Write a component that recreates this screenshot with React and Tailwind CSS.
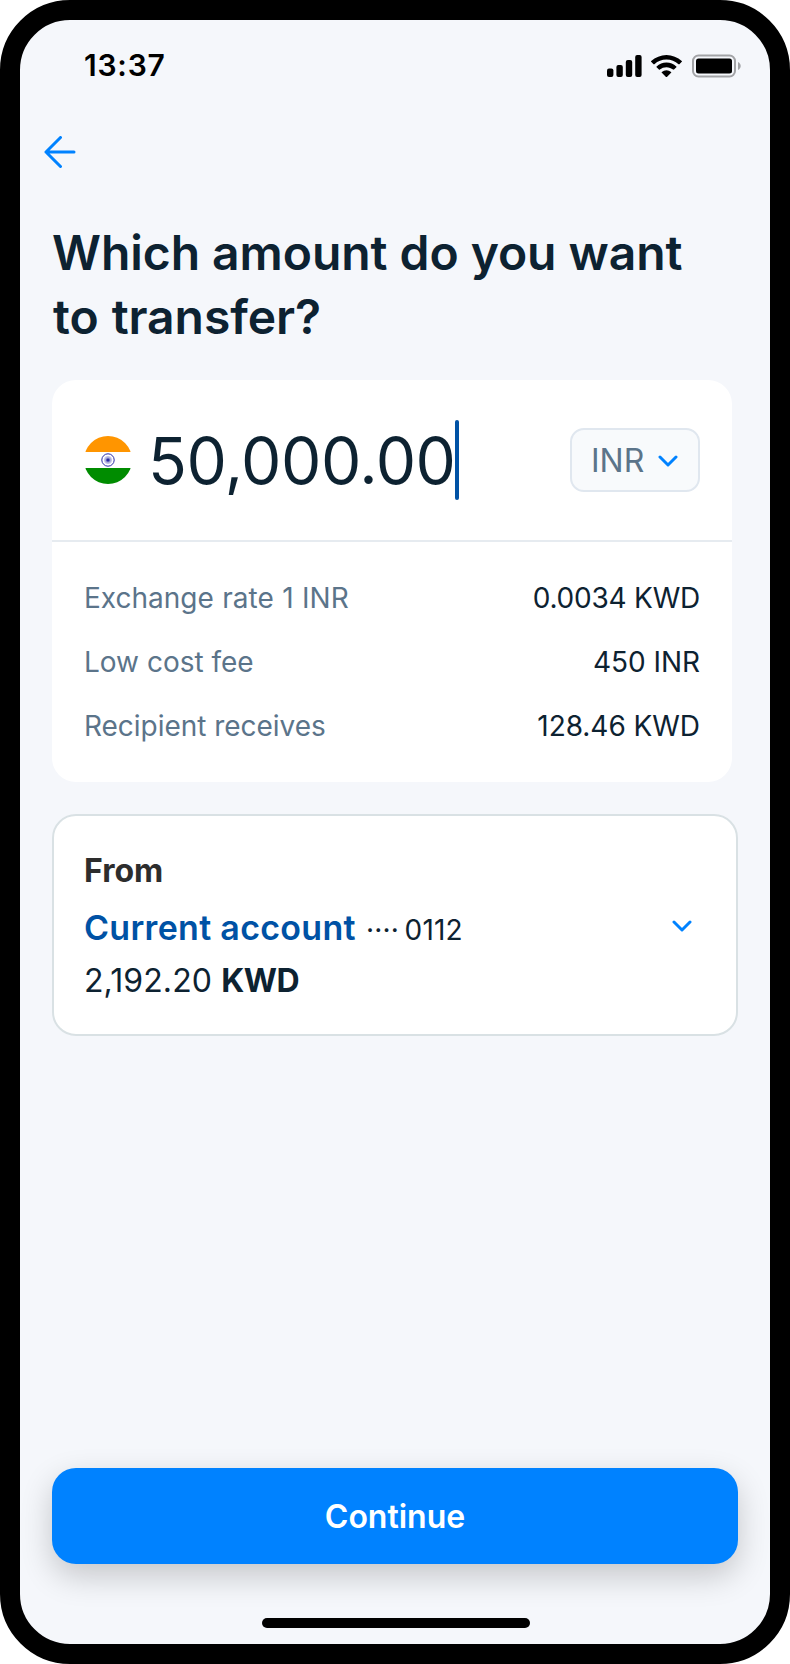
import React from 'react';

const rates = [
    { label: 'Exchange rate 1 INR', value: '0.0034 KWD', labelClass: '[word-spacing:0.6px]', valueClass: 'tracking-[-0.22px]' },
    { label: 'Low cost fee', value: '450 INR', valueClass: 'tracking-[-0.05px]' },
    { label: 'Recipient receives', value: '128.46 KWD', labelClass: 'tracking-[-0.03px]', valueClass: 'tracking-[-0.05px]' },
];

const App = () => (
    <div className="w-[790px] h-[1664px] bg-white">
        <div className="w-full h-full flex flex-col rounded-[70px] border-[20px] border-black bg-[#f5f7fb] font-['Inter',sans-serif] text-[#0d2231]">
            <StatusBar />

            <button className="ml-6 mt-8 w-8 h-8 shrink-0" aria-label="Back">
                <BackArrow />
            </button>

            <main className="flex-1 flex flex-col px-8 pt-8 pb-4">
                <h1 className="mt-[21px] text-[48px] leading-[64px] font-semibold">
                    <span className="tracking-[-0.05px]">Which amount do you want</span><br />
                    <span className="ml-px tracking-[-0.05px] [word-spacing:1px]">to transfer?</span>
                </h1>

                <AmountCard />
                <AccountCard />

                <button className="mt-auto mb-[54px] h-24 shrink-0 rounded-3xl bg-[#0082ff] pt-0.5 text-white text-[32px] leading-10 font-semibold shadow-[0_12px_32px_rgba(0,0,0,0.2)]">
                    Continue
                </button>
                <div className="ml-0.5 w-[268px] h-2.5 shrink-0 rounded-full bg-black self-center" />
            </main>
        </div>
    </div>
);

const StatusBar = () => (
    <header className="h-[84px] shrink-0 flex items-start justify-between pl-16 pr-[29px] text-black">
        <span className="mt-[27px] text-[30px] leading-9 font-semibold tracking-[0.8px]">13:37</span>
        <div className="mt-[34px] flex items-center">
            <SignalIcon />
            <WifiIcon />
            <BatteryIcon />
        </div>
    </header>
);

const AmountCard = () => (
    <section className="mt-[31px] w-[680px] h-[402px] shrink-0 rounded-3xl bg-white">
        <div className="h-[162px] flex items-center border-b-2 border-[#e6ebf0] px-8">
            <IndiaFlag />
            <span className="ml-4 pt-0.5 text-[64px] leading-[80px] tracking-[-0.45px]">50,000.00</span>
            <span className="w-1 h-20 rounded-sm bg-[#0052a5]" />
            <button className="ml-auto w-[130px] h-16 flex items-center rounded-[14px] border-2 border-[#e0e7ef] bg-[#f8fafc] pl-[19px] pt-0.5 text-[32px] leading-10 text-[#5b748a]">
                INR
                <ChevronDown className="ml-[14px]" />
            </button>
        </div>
        <dl className="pt-6">
            {rates.map(({ label, value, labelClass, valueClass }) => (
                <div key={label} className="flex justify-between px-8 text-[28px] leading-[64px]">
                    <dt className={`text-[#5b748a] ${labelClass || ''}`}>{label}</dt>
                    <dd className={valueClass}>{value}</dd>
                </div>
            ))}
        </dl>
    </section>
);

const AccountCard = () => (
    <section className="mt-8 h-[222px] shrink-0 flex items-center justify-between rounded-3xl border-2 border-[#d9e1e4] bg-white pl-[30px] pr-11">
        <div>
            <div className="text-[32px] leading-[42px] font-bold text-[#2d2d2d]">From</div>
            <div className="mt-3 h-12 flex items-baseline gap-2.5 leading-[48px]">
                <span className="text-[34px] font-semibold tracking-[0.3px] text-[#0052a5]">Current account</span>
                <span className="text-[28px] tracking-[0.2px] [word-spacing:-2.5px]">···· 0112</span>
            </div>
            <div className="mt-[9px] -mb-px text-[32px] leading-10 tracking-[0.1px]">
                2,192.20 <span className="font-bold tracking-[-0.4px]">KWD</span>
            </div>
        </div>
        <ChevronDown className="mt-0.5" />
    </section>
);

const BackArrow = () => (
    <svg width="32" height="32" viewBox="0 0 32 32" fill="none" stroke="#0082ff" strokeWidth="3" strokeLinecap="round" strokeLinejoin="round">
        <path d="M30 16H2M16.5 1.5L2 16l14.5 14.5" />
    </svg>
);

const ChevronDown = ({ className }) => (
    <svg className={className} width="20" height="12" viewBox="0 0 20 12" fill="none" stroke="#0082ff" strokeWidth="3" strokeLinecap="round" strokeLinejoin="round">
        <path d="M2 2l8 8 8-8" />
    </svg>
);

const SignalIcon = () => (
    <svg width="35" height="22" viewBox="0 0 35 22">
        <rect x="0" y="13.5" width="6.4" height="8.5" rx="2" />
        <rect x="9.4" y="10" width="6.4" height="12" rx="2" />
        <rect x="18.8" y="5" width="6.4" height="17" rx="2" />
        <rect x="28.2" y="0" width="6.4" height="22" rx="2" />
    </svg>
);

const WifiIcon = () => (
    <svg className="ml-[9px]" width="31" height="22" viewBox="-.1 -.2 16.9 12.5" preserveAspectRatio="none">
        <path d="M8.33 2.4c2.45 0 4.8.94 6.58 2.6.13.13.35.13.48 0l1.28-1.3a.35.35 0 000-.5 12.07 12.07 0 00-16.67 0 .35.35 0 000 .5l1.28 1.3c.13.13.35.13.48 0A9.63 9.63 0 018.33 2.4z" />
        <path d="M8.33 6.7c1.34 0 2.64.5 3.63 1.4.13.13.35.12.48 0l1.28-1.32a.36.36 0 000-.5 7.8 7.8 0 00-10.78 0 .36.36 0 000 .5l1.28 1.31c.13.13.35.13.49 0A5.43 5.43 0 018.33 6.7z" />
        <path d="M10.85 9.46c.13.13.13.36 0 .49l-2.27 2.28a.34.34 0 01-.5 0L5.81 9.95a.34.34 0 010-.49 3.8 3.8 0 015.04 0z" />
    </svg>
);

const BatteryIcon = () => (
    <svg className="ml-[10px]" width="49" height="24" viewBox="0 0 49 24">
        <rect x="1" y="1.5" width="42" height="21" rx="5.5" fill="none" stroke="#a2a3a6" strokeWidth="2" />
        <rect x="4" y="4.5" width="36" height="15" rx="2.5" />
        <path d="M46 8v8c3.6-1.5 3.6-6.5 0-8z" fill="#a2a3a6" />
    </svg>
);

const spokes = [0, 15, 30, 45, 60, 75, 90, 105, 120, 135, 150, 165];

const IndiaFlag = () => (
    <svg width="48" height="48" viewBox="0 0 48 48">
        <clipPath id="flag">
            <circle cx="24" cy="24" r="24" />
        </clipPath>
        <g clipPath="url(#flag)">
            <rect width="48" height="48" fill="#fff" />
            <rect width="48" height="16" fill="#ff9500" />
            <rect y="32" width="48" height="16" fill="#008c00" />
        </g>
        <g stroke="#2a2aa5" fill="none">
            <circle cx="24" cy="24" r="6.2" strokeWidth="1" />
            {spokes.map(a => (
                <path key={a} d="M20 24h8" strokeWidth=".3" transform={`rotate(${a} 24 24)`} />
            ))}
            <circle cx="24" cy="24" r="1.6" fill="#2a2aa5" stroke="none" />
        </g>
    </svg>
);

export default App;
